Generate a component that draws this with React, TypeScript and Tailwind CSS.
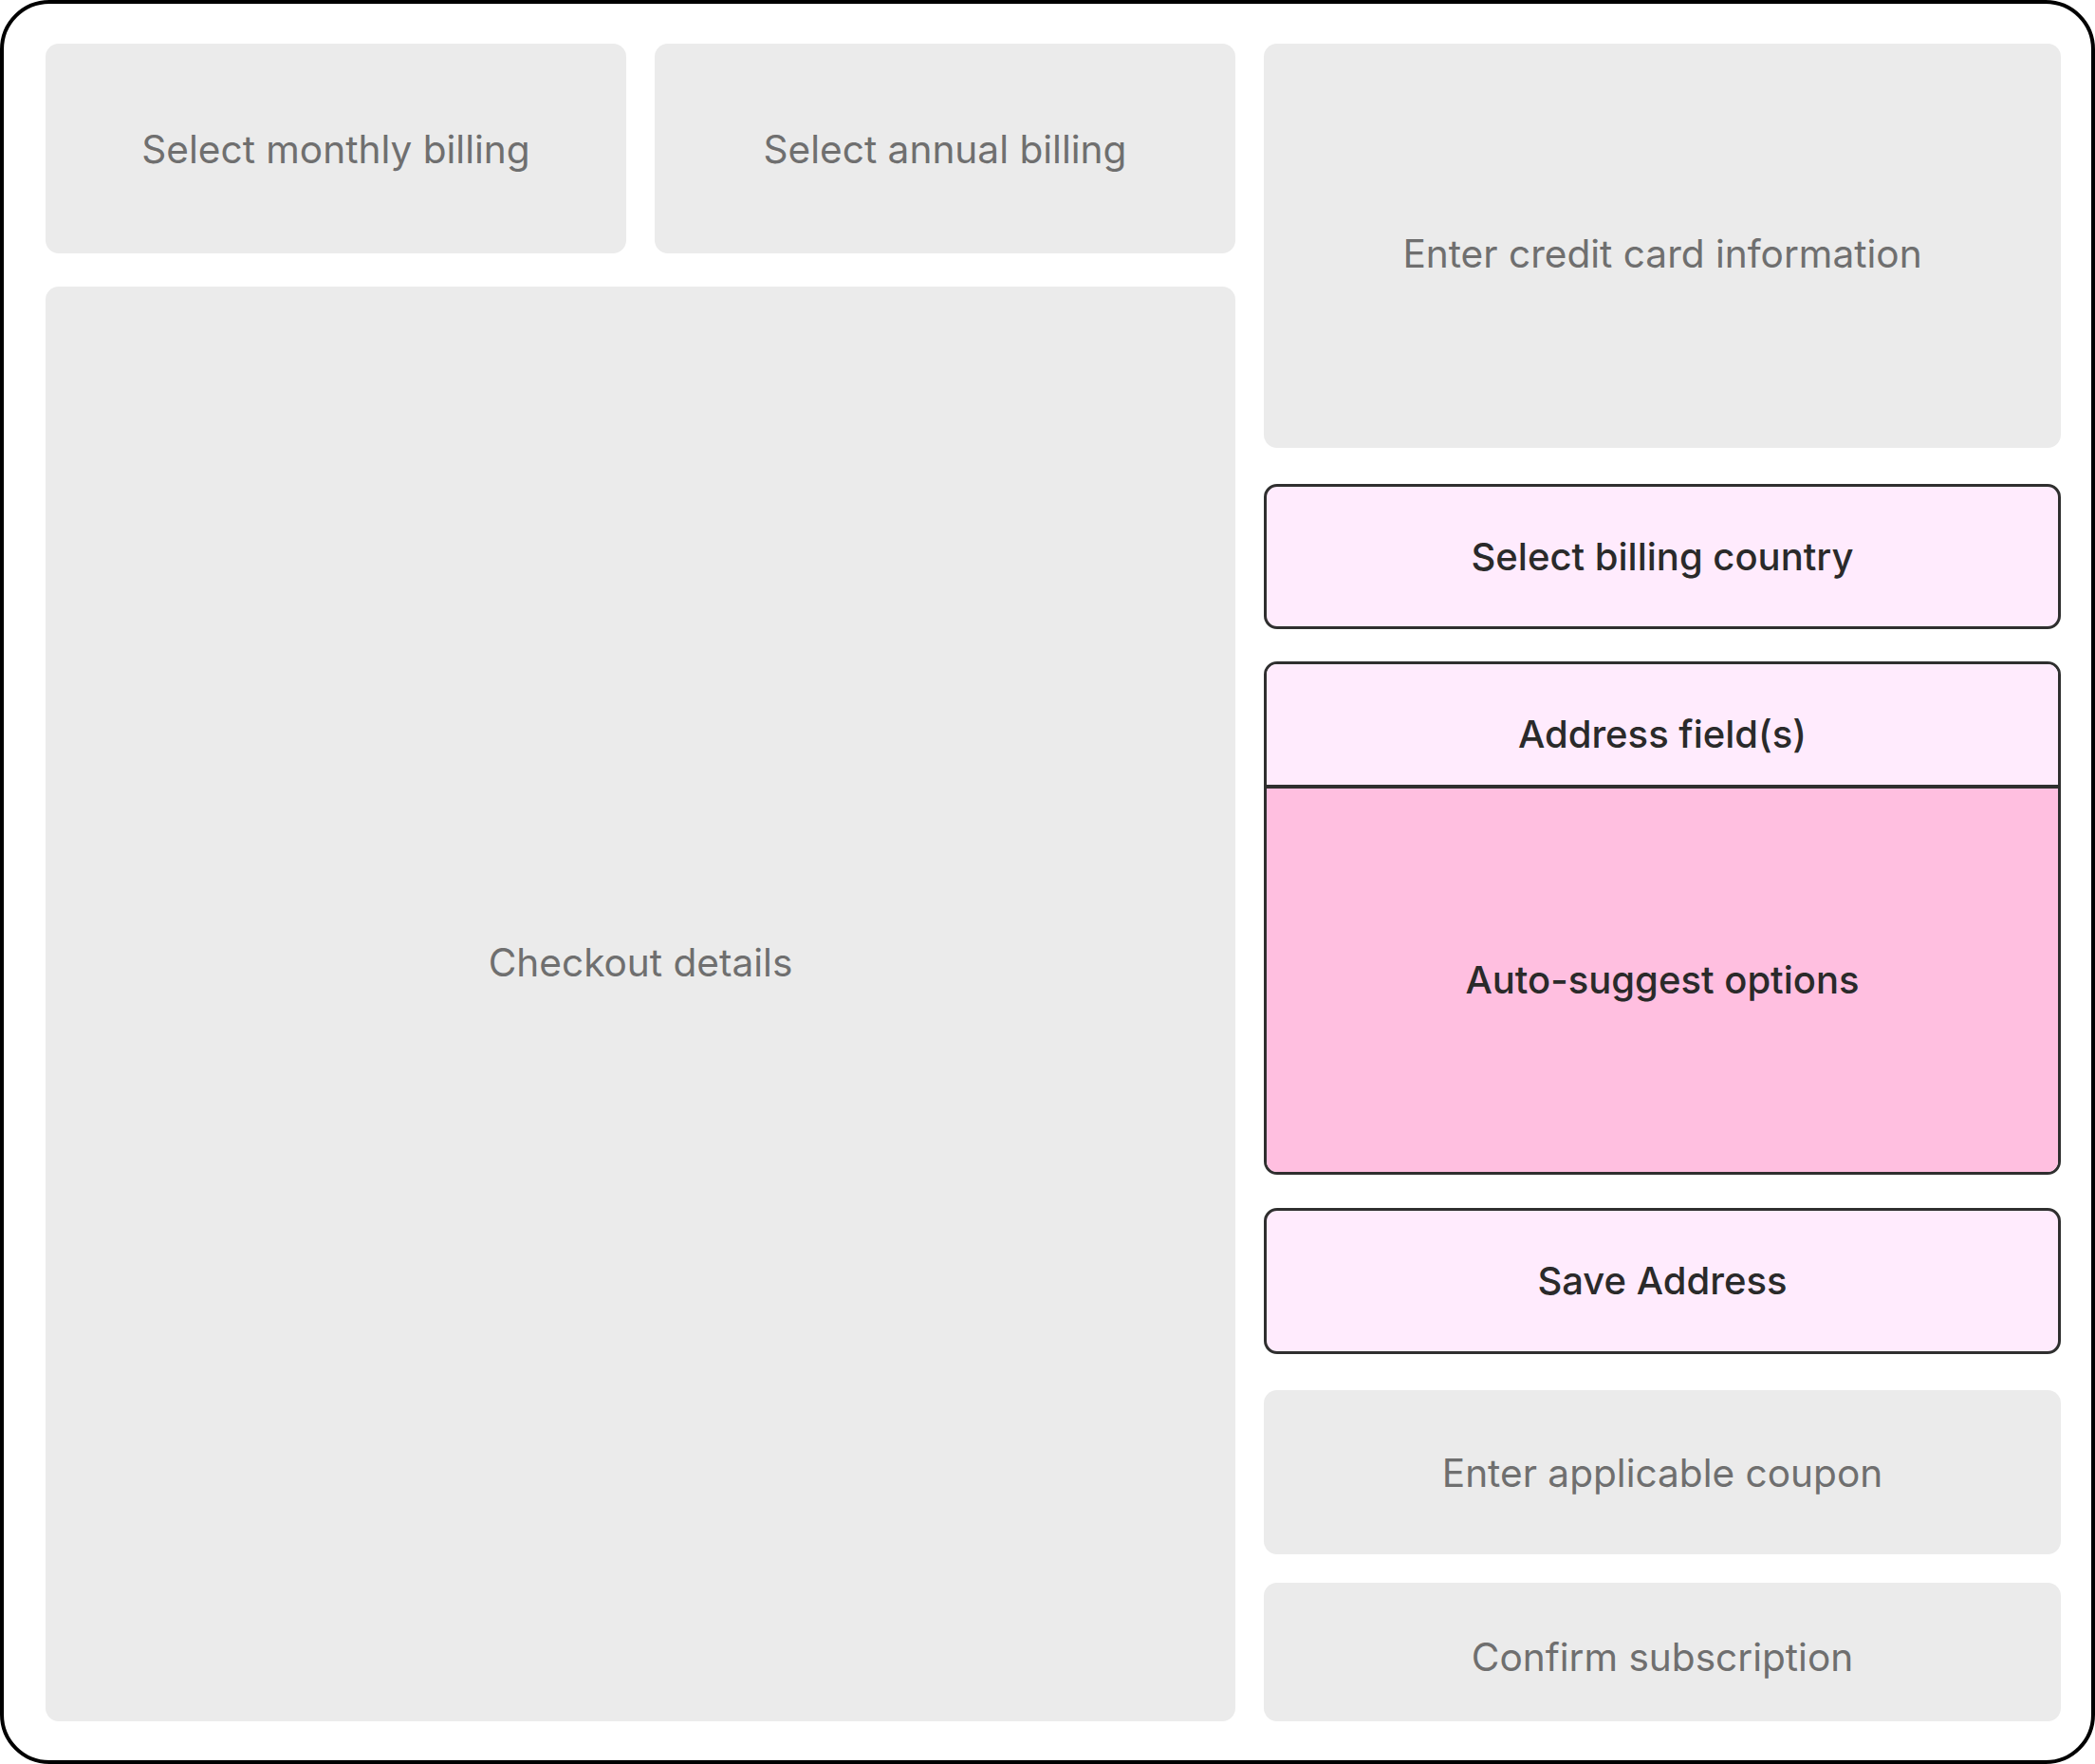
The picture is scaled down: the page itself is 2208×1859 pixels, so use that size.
const font = { fontFamily: 'Inter, "Noto Sans", sans-serif' };

function GrayBox({ label, className = '' }: { label: string; className?: string }) {
  return (
    <div
      className={`flex items-center justify-center rounded-[14px] bg-[#ebebeb] text-[40.6px] text-[#6f6f6f] ${className}`}
    >
      <span className="pt-[3px]">{label}</span>
    </div>
  );
}

function PinkBox({ label, className = '' }: { label: string; className?: string }) {
  return (
    <div
      className={`flex items-center justify-center rounded-[14px] border-[3px] border-[#2f2f2f] bg-[#ffebfd] text-[40px] font-medium text-[#2a2a2a] ${className}`}
    >
      <span>{label}</span>
    </div>
  );
}

export default function App() {
  return (
    <div className="h-[1859px] w-[2208px] bg-white" style={font}>
      <div className="flex h-full w-full rounded-[52px] border-4 border-black bg-white pt-[42px] pr-[32px] pb-[41px] pl-[44px]">
        {/* left area */}
        <div className="flex w-[1254px] flex-col">
          <div className="grid h-[221px] grid-cols-2 gap-[30px]">
            <GrayBox label="Select monthly billing" />
            <GrayBox label="Select annual billing" />
          </div>
          <GrayBox label="Checkout details" className="mt-[35px] flex-1 pb-[88px]" />
        </div>

        {/* right column */}
        <div className="ml-[30px] flex flex-1 flex-col">
          <GrayBox label="Enter credit card information" className="h-[426px] pt-[16px]" />
          <PinkBox label="Select billing country" className="mt-[38px] h-[153px]" />

          <div className="mt-[34px] flex h-[541px] flex-col overflow-hidden rounded-[14px] border-[3px] border-[#2f2f2f]">
            <div className="flex h-[127px] items-center justify-center bg-[#ffebfd] pt-[20px] text-[40px] font-medium text-[#2a2a2a]">
              Address field(s)
            </div>
            <div className="flex flex-1 items-center justify-center border-t-4 border-[#2f2f2f] bg-[#ffbfe0] text-[40px] font-medium text-[#2a2a2a]">
              Auto-suggest options
            </div>
          </div>

          <PinkBox label="Save Address" className="mt-[35px] h-[154px]" />
          <GrayBox label="Enter applicable coupon" className="mt-[38px] h-[173px]" />
          <GrayBox label="Confirm subscription" className="mt-[30px] flex-1 pt-[10px]" />
        </div>
      </div>
    </div>
  );
}
